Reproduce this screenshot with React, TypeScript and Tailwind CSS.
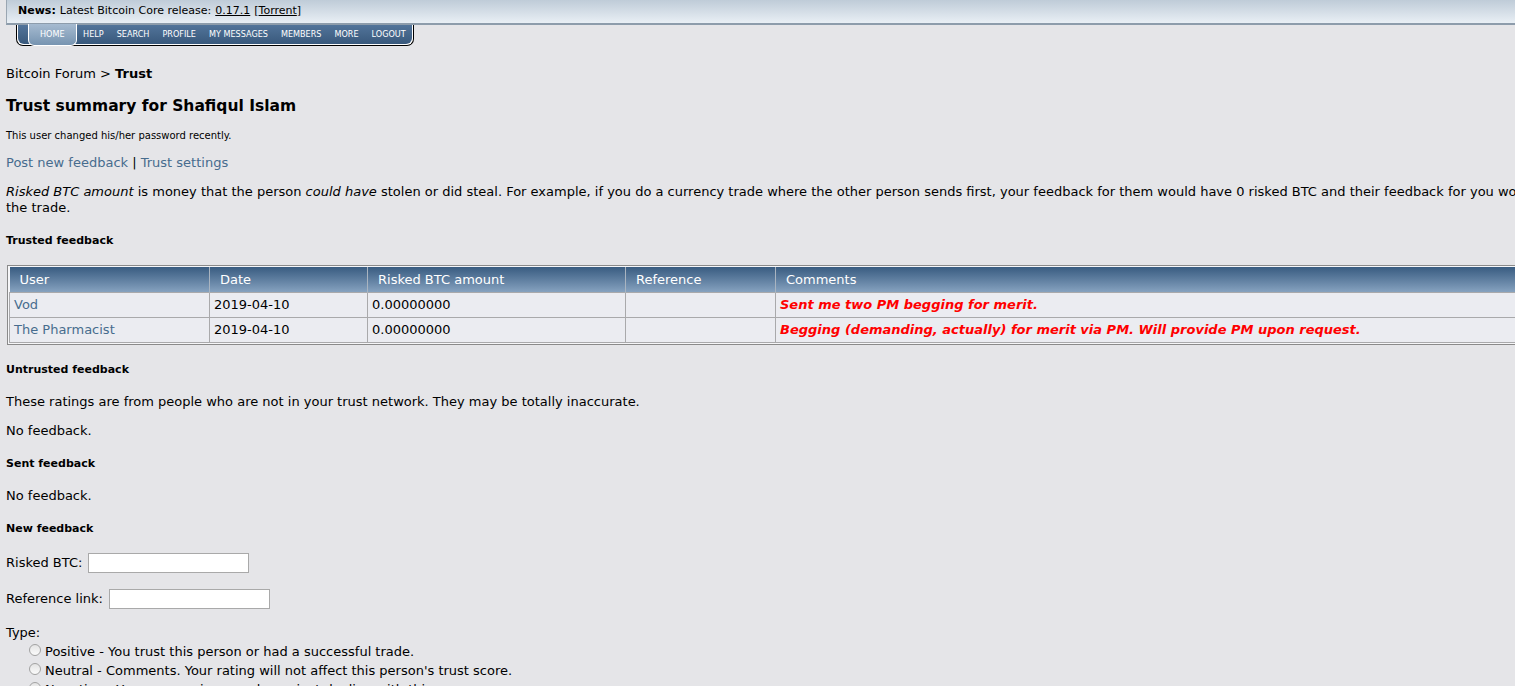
const navItems = ["HOME", "HELP", "SEARCH", "PROFILE", "MY MESSAGES", "MEMBERS", "MORE", "LOGOUT"];

const trusted = [
  { user: "Vod", date: "2019-04-10", risked: "0.00000000", reference: "", comment: "Sent me two PM begging for merit." },
  {
    user: "The Pharmacist",
    date: "2019-04-10",
    risked: "0.00000000",
    reference: "",
    comment: "Begging (demanding, actually) for merit via PM. Will provide PM upon request.",
  },
];

const types = [
  "Positive - You trust this person or had a successful trade.",
  "Neutral - Comments. Your rating will not affect this person's trust score.",
  "Negative - You are warning people against dealing with this person.",
];

function NewsBar() {
  return (
    <div className="ml-[6px] flex h-[25px] items-center border-l border-b-2 border-l-[#9aa6b2] border-b-[#8d9cab] bg-gradient-to-b from-[#bfccd8] to-[#e9eff5] pl-[11px] text-[11px] text-black">
      <b>News:</b>
      <span className="ml-[4px]">Latest Bitcoin Core release:</span>
      <a className="ml-[4px] underline">0.17.1</a>
      <span className="ml-[4px]">
        [<a className="underline">Torrent</a>]
      </span>
    </div>
  );
}

function NavTabs() {
  return (
    <div className="ml-[16px] w-[398px] rounded-b-[7px] border border-t-0 border-black bg-white pb-px pl-px pr-px">
      <div className="flex h-[19px] items-stretch whitespace-nowrap rounded-b-[6px] bg-gradient-to-b from-[#52749a] to-[#39597c] pl-[10px] font-['DejaVu_Sans_Condensed',sans-serif] text-[9px] text-white">
        {navItems.map((item, i) =>
          i === 0 ? (
            <span
              key={item}
              className="-mt-px mb-[-2px] flex items-center rounded-b-[6px] border border-t-0 border-white bg-gradient-to-b from-[#a6bbd0] to-[#7794b1] px-[11px]"
            >
              {item}
            </span>
          ) : (
            <span key={item} className="flex items-center px-[6.5px]">
              {item}
            </span>
          )
        )}
      </div>
    </div>
  );
}

function SectionTitle({ children }: { children: React.ReactNode }) {
  return <div className="text-[11px] font-bold leading-[14px]">{children}</div>;
}

function TrustTable() {
  return (
    <div className="mt-[17px] ml-px border border-[#8a8a8a] bg-[#f6f6f8] p-px">
      <table className="w-full table-fixed border-collapse text-[13px]">
        <colgroup>
          <col className="w-[200px]" />
          <col className="w-[158px]" />
          <col className="w-[258px]" />
          <col className="w-[150px]" />
          <col />
        </colgroup>
        <thead>
          <tr className="h-[25px] bg-gradient-to-b from-[#395c81] to-[#86a2bf] text-left text-white">
            {["User", "Date", "Risked BTC amount", "Reference", "Comments"].map((h) => (
              <th key={h} className="border-r border-[#a9b4c0] px-[10px] font-normal">
                {h}
              </th>
            ))}
          </tr>
        </thead>
        <tbody>
          {trusted.map((r) => (
            <tr key={r.user} className="h-[25px] bg-[#ebecf1]">
              <td className="border border-[#a9a9ab] px-[4px] text-[#476c8e]">{r.user}</td>
              <td className="border border-[#a9a9ab] px-[4px]">{r.date}</td>
              <td className="border border-[#a9a9ab] px-[4px]">{r.risked}</td>
              <td className="border border-[#a9a9ab] px-[4px]">{r.reference}</td>
              <td className="border border-[#a9a9ab] px-[4px] font-bold italic text-[#ff0000]">{r.comment}</td>
            </tr>
          ))}
        </tbody>
      </table>
    </div>
  );
}

export default function App() {
  return (
    <div className="h-screen w-screen overflow-hidden bg-[#e5e5e8]">
      <div className="w-[2000px] font-['DejaVu_Sans',sans-serif] text-[13px] text-black">
        <NewsBar />
        <NavTabs />

        <div className="px-[6px]">
          <div className="mt-[20px] leading-[16px]">
            Bitcoin Forum &gt; <b>Trust</b>
          </div>

          <h1 className="mt-[14px] text-[15.5px] font-bold leading-[20px]">Trust summary for Shafiqul Islam</h1>

          <div className="mt-[14px] text-[10px] leading-[12px]">This user changed his/her password recently.</div>

          <div className="mt-[13px] leading-[16px]">
            <a className="text-[#476c8e]">Post new feedback</a> | <a className="text-[#476c8e]">Trust settings</a>
          </div>

          <p className="mt-[13px] leading-[16px]">
            <i>Risked BTC amount</i> is money that the person <i>could have</i> stolen or did steal. For example, if you
            do a currency trade where the other person sends first, your feedback for them would have 0 risked BTC and
            their feedback for you would have risked BTC equal to the value of the currency that you sent in
            <br />
            the trade.
          </p>

          <div className="mt-[18px]">
            <SectionTitle>Trusted feedback</SectionTitle>
          </div>

          <TrustTable />

          <div className="mt-[18px]">
            <SectionTitle>Untrusted feedback</SectionTitle>
          </div>
          <div className="mt-[17px] leading-[16px]">
            These ratings are from people who are not in your trust network. They may be totally inaccurate.
          </div>
          <div className="mt-[13px] leading-[16px]">No feedback.</div>

          <div className="mt-[18px]">
            <SectionTitle>Sent feedback</SectionTitle>
          </div>
          <div className="mt-[17px] leading-[16px]">No feedback.</div>

          <div className="mt-[18px]">
            <SectionTitle>New feedback</SectionTitle>
          </div>

          <div className="mt-[17px] flex items-center leading-[16px]">
            <span>Risked BTC:</span>
            <input className="ml-[6px] h-[20px] w-[161px] border border-[#a9a9a9] bg-white px-1 outline-none" />
          </div>
          <div className="mt-[16px] flex items-center leading-[16px]">
            <span>Reference link:</span>
            <input className="ml-[6px] h-[20px] w-[161px] border border-[#a9a9a9] bg-white px-1 outline-none" />
          </div>

          <div className="mt-[16px] leading-[16px]">Type:</div>
          <div className="ml-[23px] mt-[3px] flex flex-col gap-[3px]">
            {types.map((t) => (
              <label key={t} className="flex items-center leading-[16px]">
                <span className="mr-[4px] -mt-[3px] h-[12px] w-[12px] rounded-full border border-[#a2a2a2] bg-gradient-to-b from-[#e4e4e4] to-[#fbfbfb]" />
                {t}
              </label>
            ))}
          </div>
        </div>
      </div>
    </div>
  );
}
